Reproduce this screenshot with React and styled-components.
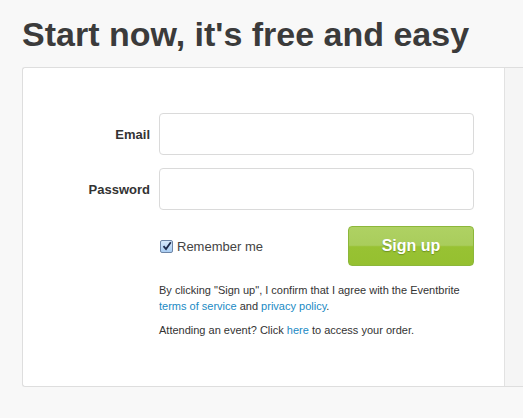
import React, { useState } from "react";
import styled, { createGlobalStyle } from "styled-components";

const GlobalStyle = createGlobalStyle`
  html, body {
    margin: 0;
    padding: 0;
    background: #f8f8f8;
    font-family: "Liberation Sans", Arial, sans-serif;
    overflow: hidden;
  }
`;

const StyledPage = styled.div`
  padding: 13px 0 0 22px;
  height: 418px;
  box-sizing: border-box;
`;

const StyledTitle = styled.h1`
  margin: 0;
  color: #3b3b3b;
  font-size: 34px;
  font-weight: 700;
  line-height: 42px;
`;

const StyledCard = styled.div`
  margin-top: 12px;
  display: flex;
  height: 320px;
  box-sizing: border-box;
  border: 1px solid #dedede;
  border-right: none;
  border-radius: 3px 0 0 3px;
  background: #fff;
`;

const StyledMain = styled.div`
  width: 482px;
  box-sizing: border-box;
  padding-top: 45px;
  border-right: 1px solid #e2e2e2;
`;

const StyledAside = styled.div`
  flex: 1;
  background: #f5f5f5;
`;

const StyledForm = styled.form`
  display: grid;
  grid-template-columns: 127px 315px;
  column-gap: 9px;
  row-gap: 13px;
  align-items: center;
`;

const StyledLabel = styled.label`
  text-align: right;
  color: #333;
  font-size: 13px;
  font-weight: 700;
`;

const StyledInput = styled.input`
  height: 42px;
  box-sizing: border-box;
  border: 1px solid #dadada;
  border-radius: 4px;
  font-size: 14px;
  padding: 0 10px;
  outline: none;
  font-family: inherit;

  &:focus {
    border-color: #a8c8e8;
  }
`;

const StyledActions = styled.div`
  grid-column: 2;
  margin-top: 3px;
  display: flex;
  align-items: center;
  justify-content: space-between;
`;

const StyledRemember = styled.label`
  display: inline-flex;
  align-items: center;
  gap: 4px;
  color: #444;
  font-size: 13px;
  cursor: pointer;
  margin-left: 1px;
`;

const StyledBox = styled.span`
  width: 11px;
  height: 11px;
  border: 1px solid #6d85a6;
  border-radius: 2px;
  background: linear-gradient(#d6e8fb, #a9cdf2);
  display: inline-flex;
  align-items: center;
  justify-content: center;
`;

const StyledButton = styled.button`
  width: 126px;
  height: 40px;
  border: 1px solid #8cb73a;
  border-radius: 4px;
  background: linear-gradient(#afd163 0%, #a9cd5c 48%, #98c233 52%, #95c030 100%);
  color: #fff;
  font-family: inherit;
  font-size: 16px;
  font-weight: 700;
  text-shadow: 0 1px 1px rgba(60, 90, 10, 0.45);
  cursor: pointer;
`;

const StyledNote = styled.div`
  grid-column: 2;
  margin-top: 3px;
  color: #333;
  font-size: 11px;
  line-height: 16px;

  p {
    margin: 0 0 8px 0;
  }

  a {
    color: #1a8ac4;
    text-decoration: none;
  }
`;

export default function App() {
  const [remember, setRemember] = useState(true);

  return (
    <StyledPage>
      <GlobalStyle />
      <StyledTitle>Start now, it's free and easy</StyledTitle>
      <StyledCard>
        <StyledMain>
          <StyledForm onSubmit={(e) => e.preventDefault()}>
            <StyledLabel htmlFor="email">Email</StyledLabel>
            <StyledInput id="email" type="text" />
            <StyledLabel htmlFor="password">Password</StyledLabel>
            <StyledInput id="password" type="password" />
            <StyledActions>
              <StyledRemember onClick={() => setRemember(!remember)}>
                <StyledBox>
                  {remember && (
                    <svg width="10" height="10" viewBox="0 0 10 10">
                      <path
                        d="M1.5 5.2 L4 8 L8.8 1.2"
                        fill="none"
                        stroke="#1d2a4a"
                        strokeWidth="1.8"
                      />
                    </svg>
                  )}
                </StyledBox>
                Remember me
              </StyledRemember>
              <StyledButton type="submit">Sign up</StyledButton>
            </StyledActions>
            <StyledNote>
              <p>
                By clicking "Sign up", I confirm that I agree with the Eventbrite{" "}
                <a href="#">terms of service</a> and <a href="#">privacy policy</a>.
              </p>
              <p>
                Attending an event? Click <a href="#">here</a> to access your order.
              </p>
            </StyledNote>
          </StyledForm>
        </StyledMain>
        <StyledAside />
      </StyledCard>
    </StyledPage>
  );
}
